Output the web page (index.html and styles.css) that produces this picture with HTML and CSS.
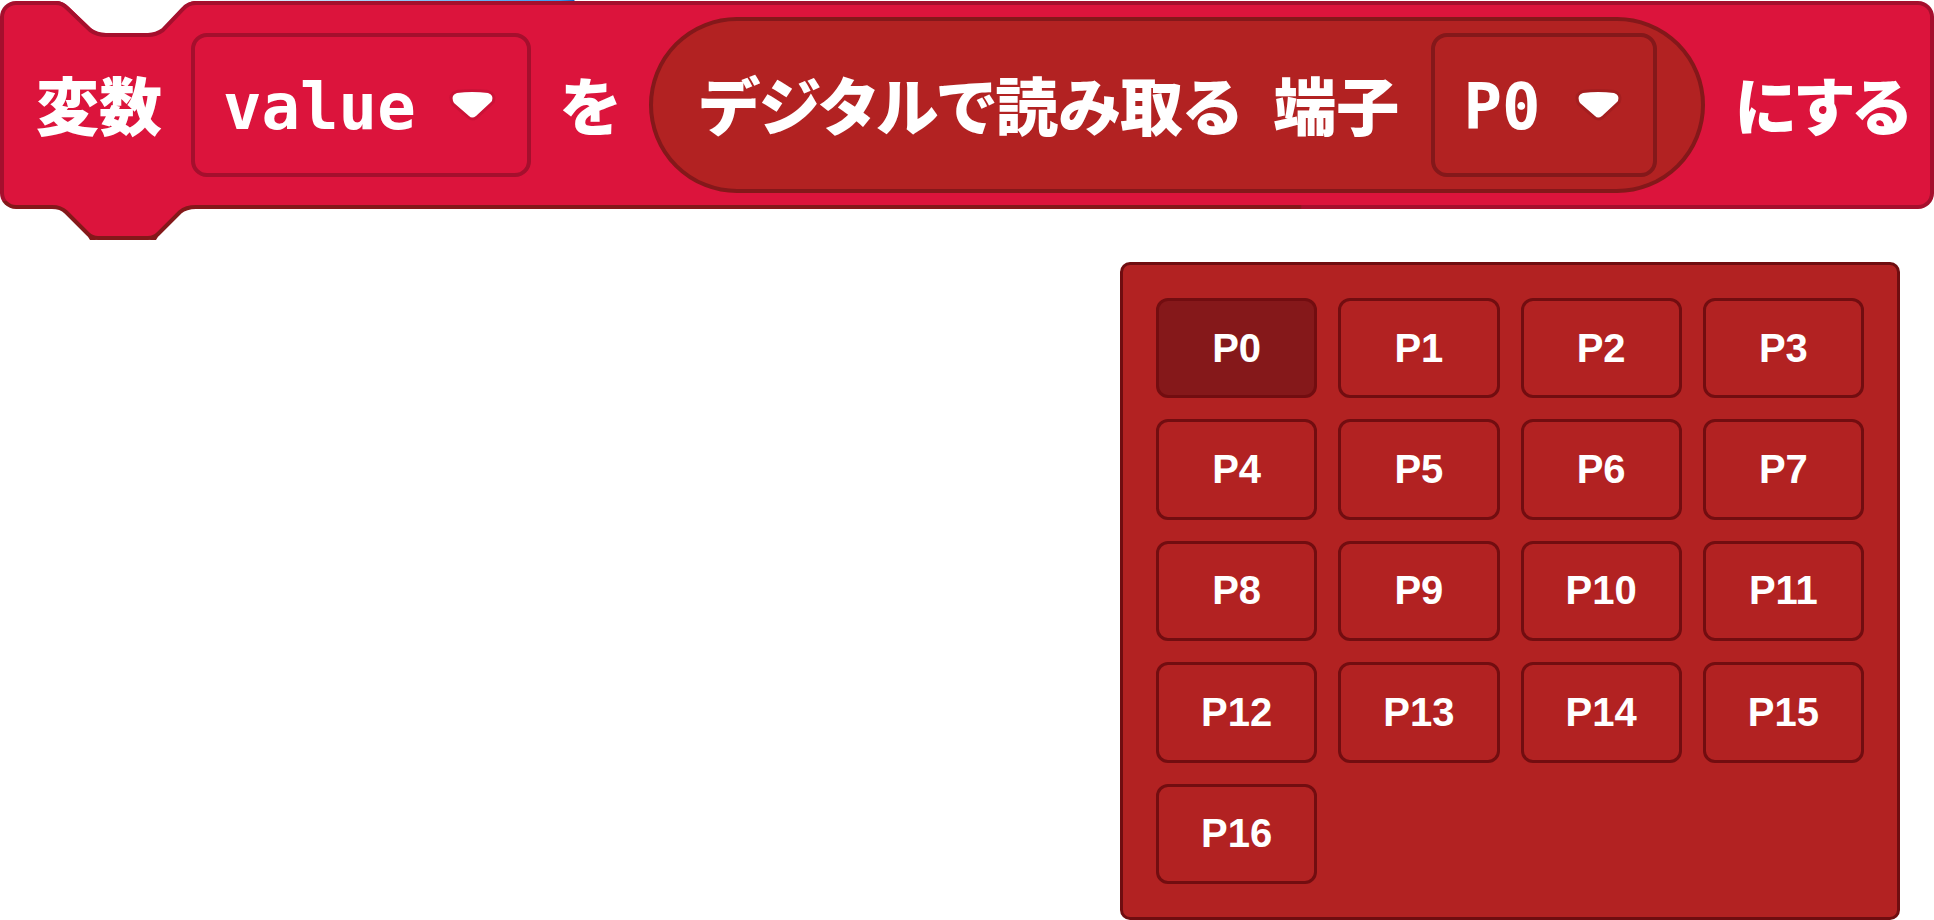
FILE: index.html
```html
<!DOCTYPE html>
<html lang="ja">
<head>
<meta charset="utf-8">
<title>変数ブロック</title>
<link rel="stylesheet" href="styles.css">
</head>
<body>
<main class="workspace">
  <section class="block">
    <svg class="notch" width="136" height="36" viewBox="0 0 136 36" aria-hidden="true">
      <path class="notch-fill" d="M6 0 Q12 1 16 5 L40 28 Q46 33 54 33 H96 Q104 33 110 28 L132 5 Q136 1 142 0 Z"/>
      <path class="notch-line" d="M0 2 H4 Q10 2 15 7 L38 29 Q45 34 54 34 H96 Q104 34 111 29 L131 8 Q136 2 144 2"/>
    </svg>
    <span class="label">変数</span>
    <span class="field field-variable">
      <select class="field-select" aria-label="変数"><option>value</option></select>
      <svg class="arrow" width="41" height="26" viewBox="0 0 41 26" aria-hidden="true"><path d="M5 1 Q20 -1 36 1 Q42 3 40 9 L38 11 L24 24 Q20 27 17 24 L2 11 L1 9 Q-1 3 5 1 Z"/></svg>
    </span>
    <span class="label">を</span>
    <div class="reporter">
      <span class="label">デジタルで読み取る</span>
      <span class="label">端子</span>
      <span class="field field-pin">
        <select class="field-select" aria-label="端子"><option>P0</option></select>
        <svg class="arrow" width="41" height="26" viewBox="0 0 41 26" aria-hidden="true"><path d="M5 1 Q20 -1 36 1 Q42 3 40 9 L38 11 L24 24 Q20 27 17 24 L2 11 L1 9 Q-1 3 5 1 Z"/></svg>
      </span>
    </div>
    <span class="label">にする</span>
    <svg class="tab" width="144" height="36" viewBox="0 0 144 36" aria-hidden="true">
      <path class="tab-fill" d="M0 0 V2 Q9 2 14 7 L36 29 Q40 33 46 33 H96 Q102 33 106 29 L128 7 Q134 2 144 2 V0 Z"/>
      <path class="tab-line" d="M0 2 Q9 2 14 7 L36 29 Q40 33 46 33 H96 Q102 33 106 29 L128 7 Q134 2 144 2"/>
      <path class="tab-edge" d="M35 30 L38 35 H46 Q40 34 35 30 Z M107 30 L104 35 H96 Q102 34 107 30 Z"/>
    </svg>
  </section>
  <section class="picker" aria-label="端子">
    <button class="pin pin-selected">P0</button>
    <button class="pin">P1</button>
    <button class="pin">P2</button>
    <button class="pin">P3</button>
    <button class="pin">P4</button>
    <button class="pin">P5</button>
    <button class="pin">P6</button>
    <button class="pin">P7</button>
    <button class="pin">P8</button>
    <button class="pin">P9</button>
    <button class="pin">P10</button>
    <button class="pin">P11</button>
    <button class="pin">P12</button>
    <button class="pin">P13</button>
    <button class="pin">P14</button>
    <button class="pin">P15</button>
    <button class="pin">P16</button>
  </section>
</main>
</body>
</html>
```

FILE: styles.css
```css
* {
  box-sizing: border-box;
}

body {
  margin: 0;
  background: #fff;
  color: #fff;
  font-family: "Liberation Sans", "Noto Sans CJK JP", sans-serif;
}

.workspace {
  display: flex;
  flex-direction: column;
  gap: 53px;
  min-height: 100vh;
  padding-top: 1px;
  background: linear-gradient(90deg, #fff 200px, #3a9bf0 560px, #1565c0 574px, #fff 575px) top / 100% 1px no-repeat;
}

.block {
  position: relative;
  display: flex;
  align-items: center;
  gap: 29px;
  padding: 12px 0 12px 32px;
  border: 4px solid transparent;
  border-radius: 16px;
  background:
    linear-gradient(#dc143c, #dc143c) padding-box,
    linear-gradient(90deg, #84181a 1300px, #a50f2d 1302px) bottom / 100% 8px no-repeat border-box,
    linear-gradient(#a50f2d, #a50f2d) border-box;
}

.notch,
.tab {
  position: absolute;
  overflow: visible;
}

.notch {
  top: -4px;
  left: 48px;
}

.notch-fill {
  fill: #fff;
}

.notch-line {
  fill: none;
  stroke: #a50f2d;
  stroke-width: 4;
}

.tab {
  bottom: -36px;
  left: 48px;
}

.tab-edge {
  fill: #84181a;
}

.tab-fill {
  fill: #dc143c;
}

.tab-line {
  fill: none;
  stroke: #84181a;
  stroke-width: 4;
}

.label {
  padding-bottom: 4px;
  font-family: "Noto Sans CJK JP", sans-serif;
  font-size: 63px;
  font-weight: 900;
  line-height: 80px;
  white-space: nowrap;
  font-feature-settings: "palt";
}

.field {
  position: relative;
  display: flex;
  flex-shrink: 0;
  height: 144px;
}

.field-variable {
  width: 340px;
  color: #a50f2d;
}

.field-pin {
  width: 226px;
  color: #84181a;
}

.field-select {
  width: 100%;
  padding: 4px 28px 0;
  border: 4px solid;
  border-radius: 16px;
  background: transparent;
  color: inherit;
  font-family: "DejaVu Sans Mono", monospace;
  font-size: 64px;
  font-weight: 700;
  appearance: none;
  -webkit-text-fill-color: #fff;
}

.arrow {
  position: absolute;
  top: 59px;
  right: 38px;
  overflow: visible;
  fill: #fff;
  stroke: currentColor;
  stroke-opacity: 0.3;
  stroke-width: 6;
  paint-order: stroke;
  pointer-events: none;
}

.reporter {
  display: flex;
  flex-shrink: 0;
  align-items: center;
  justify-content: space-between;
  width: 1056px;
  height: 176px;
  padding: 0 44px 0 46px;
  border: 4px solid #84181a;
  border-radius: 88px;
  background: #b22222;
}

.picker {
  display: grid;
  flex: 1;
  grid-template-columns: repeat(4, 1fr);
  grid-template-rows: repeat(5, 1fr);
  gap: 21px;
  align-self: flex-end;
  width: 780px;
  margin-right: 34px;
  padding: 33px;
  border: 3px solid #6f0d10;
  border-radius: 10px;
  background: #b22222;
}

.pin {
  padding: 0;
  border: 3px solid #720d10;
  border-radius: 12px;
  background: transparent;
  color: #fff;
  font-family: "Liberation Sans", Arial, sans-serif;
  font-size: 40px;
  font-weight: 700;
}

.pin-selected {
  background: #85181a;
}
```
